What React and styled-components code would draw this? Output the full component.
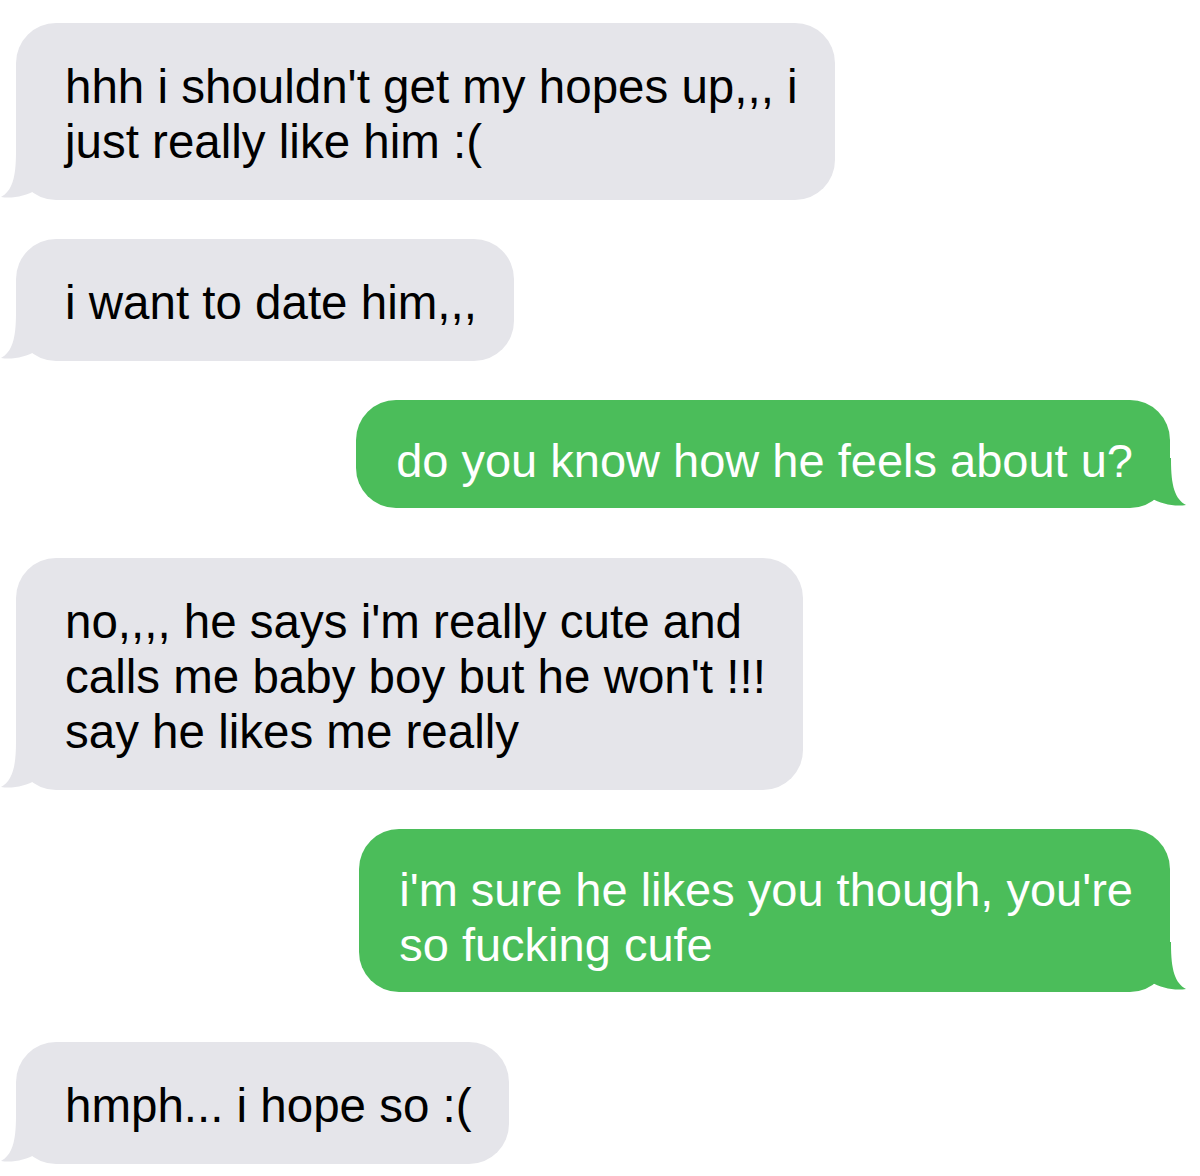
import React from "react";
import styled, { createGlobalStyle } from "styled-components";

const messages = [
  { me: false, lines: ["hhh i shouldn't get my hopes up,,, i", "just really like him :("] },
  { me: false, lines: ["i want to date him,,,"] },
  { me: true, lines: ["do you know how he feels about u?"] },
  {
    me: false,
    lines: [
      "no,,,, he says i'm really cute and",
      "calls me baby boy but he won't !!!",
      "say he likes me really",
    ],
  },
  { me: true, lines: ["i'm sure he likes you though, you're", "so fucking cufe"] },
  { me: false, lines: ["hmph... i hope so :("] },
];

const Tail = ({ me }) => (
  <TailShape $me={me} viewBox="0 0 60 50" width="60" height="50">
    <path d="M16 2 C16 28 12 41 1 47 C12 49 26 46 36 40 L36 0 L16 0 Z" />
  </TailShape>
);

const App = () => {
  return (
    <>
      <GlobalStyle />
      <Thread>
        {messages.map((m, i) => (
          <Bubble key={i} $me={m.me}>
            {m.lines.map((line, j) => (
              <Line key={j}>{line}</Line>
            ))}
            <Tail me={m.me} />
          </Bubble>
        ))}
      </Thread>
    </>
  );
};

export default App;

const GlobalStyle = createGlobalStyle`
  html, body {
    margin: 0;
    padding: 0;
    background: #ffffff;
  }
`;

const Thread = styled.div`
  width: 1200px;
  height: 1176px;
  box-sizing: border-box;
  padding-top: 23px;
  display: flex;
  flex-direction: column;
  gap: 39px;
  overflow: hidden;
  background: #ffffff;
`;

const Bubble = styled.div`
  position: relative;
  align-self: ${(p) => (p.$me ? "flex-end" : "flex-start")};
  margin: ${(p) => (p.$me ? "0 30px 11px 0" : "0 0 0 16px")};
  padding: ${(p) => (p.$me ? "33px 37px 20px 40px" : "36px 37px 31px 49px")};
  background: ${(p) => (p.$me ? "#4bbd5a" : "#e5e5ea")};
  color: ${(p) => (p.$me ? "#ffffff" : "#000000")};
  border-radius: 40px;
  font-family: "Liberation Sans", Arial, sans-serif;
  font-size: ${(p) => (p.$me ? "47px" : "47.5px")};
  line-height: 55px;
  white-space: nowrap;
`;

const Line = styled.div`
  display: block;
`;

const TailShape = styled.svg`
  position: absolute;
  bottom: 0;
  ${(p) => (p.$me ? "right: -17px; transform: scaleX(-1);" : "left: -16px;")}
  fill: ${(p) => (p.$me ? "#4bbd5a" : "#e5e5ea")};
`;
